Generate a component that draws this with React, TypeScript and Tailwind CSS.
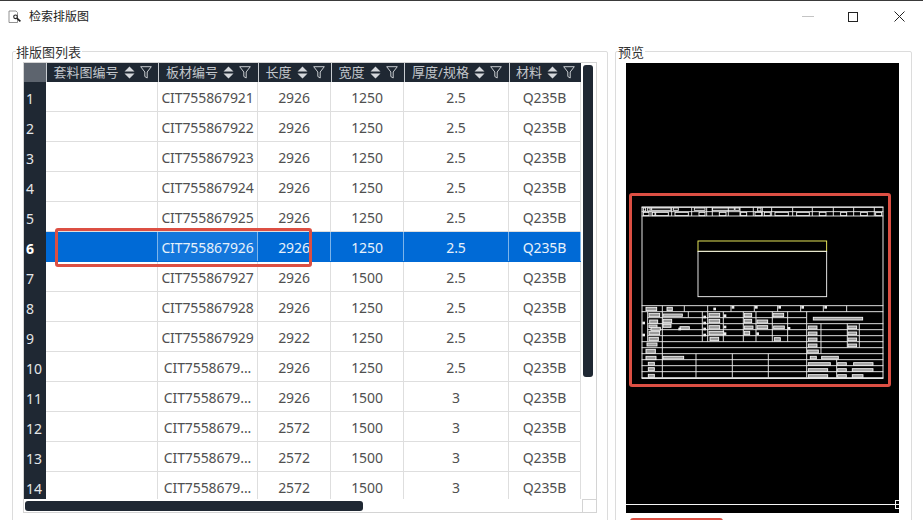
import React from "react";

type Row = { no: number; board: string; len: string; wid: string; thick: string };

const columns = [
  { title: "套料图编号", w: "w-[112px]" },
  { title: "板材编号", w: "w-[100px]" },
  { title: "长度", w: "w-[73px]" },
  { title: "宽度", w: "w-[73px]" },
  { title: "厚度/规格", w: "w-[105px]" },
  { title: "材料", w: "w-[72px]" },
];

const rows: Row[] = [
  { no: 1, board: "CIT755867921", len: "2926", wid: "1250", thick: "2.5" },
  { no: 2, board: "CIT755867922", len: "2926", wid: "1250", thick: "2.5" },
  { no: 3, board: "CIT755867923", len: "2926", wid: "1250", thick: "2.5" },
  { no: 4, board: "CIT755867924", len: "2926", wid: "1250", thick: "2.5" },
  { no: 5, board: "CIT755867925", len: "2926", wid: "1250", thick: "2.5" },
  { no: 6, board: "CIT755867926", len: "2926", wid: "1250", thick: "2.5" },
  { no: 7, board: "CIT755867927", len: "2926", wid: "1500", thick: "2.5" },
  { no: 8, board: "CIT755867928", len: "2926", wid: "1250", thick: "2.5" },
  { no: 9, board: "CIT755867929", len: "2922", wid: "1250", thick: "2.5" },
  { no: 10, board: "CIT7558679...", len: "2926", wid: "1250", thick: "2.5" },
  { no: 11, board: "CIT7558679...", len: "2926", wid: "1500", thick: "3" },
  { no: 12, board: "CIT7558679...", len: "2572", wid: "1500", thick: "3" },
  { no: 13, board: "CIT7558679...", len: "2572", wid: "1500", thick: "3" },
  { no: 14, board: "CIT7558679...", len: "2572", wid: "1500", thick: "3" },
];

const font = "font-['Noto_Sans','Noto_Sans_CJK_SC',sans-serif]";

const SortIcon = () => (
  <svg width="11" height="13" viewBox="0 0 11 13" className="shrink-0">
    <path d="M5.5 0.5 L10.5 5.5 L0.5 5.5 Z M0.5 7.5 L10.5 7.5 L5.5 12.5 Z" fill="#d5d8dc" />
  </svg>
);

const FilterIcon = () => (
  <svg width="12" height="13" viewBox="0 0 12 13" className="shrink-0">
    <path d="M0.7 0.7 H11.3 L7.2 6 V12 L4.8 10.5 V6 Z" fill="none" stroke="#c8ccd0" strokeWidth="1" />
  </svg>
);

const TitleIcon = () => (
  <svg width="14" height="14" viewBox="0 0 14 14" className="shrink-0">
    <path d="M1 1 H8 L9.5 2.5 V12.5 H1 Z" fill="#fff" stroke="#777" strokeWidth="0.8" />
    <circle cx="7.5" cy="6.8" r="1.8" fill="#fff" stroke="#222" strokeWidth="1.1" />
    <path d="M8.8 8.2 L12.4 11.4" stroke="#222" strokeWidth="1.7" />
  </svg>
);

const Box = ({ x, y, w, h, fill }: { x: number; y: number; w: number; h: number; fill?: boolean }) => (
  <rect x={x} y={y} width={w} height={h} fill={fill ? "#9a9a9a" : "none"} stroke="#f2f2f2" strokeWidth="2.8" />
);

const Ln = ({ x1, y1, x2, y2 }: { x1: number; y1: number; x2: number; y2: number }) => (
  <line x1={x1} y1={y1} x2={x2} y2={y2} stroke="#ececec" strokeWidth="2.8" />
);

// coordinates below are in 3x crop space, easier to read off
const topBand: number[][] = [
  [55, 54, 7, 9], [68, 54, 7, 9], [80, 54, 58, 7], [145, 54, 15, 7], [208, 54, 32, 7], [262, 54, 66, 7],
  [330, 54, 13, 7], [398, 54, 10, 9],
  [55, 67, 17, 10], [82, 67, 8, 10], [92, 67, 38, 10], [150, 67, 40, 10], [222, 67, 18, 10], [283, 67, 20, 10],
  [347, 67, 18, 10], [390, 67, 20, 10], [418, 67, 18, 10], [450, 67, 40, 10], [515, 67, 38, 10], [583, 67, 20, 10],
  [647, 67, 18, 10], [707, 67, 20, 10], [752, 67, 18, 10],
];
const topSeps = [78, 140, 200, 245, 262, 310, 345, 385, 412, 440, 503, 562, 625, 686, 748];

const lowerBoxes: number[][] = [
  [63, 37, 32, 10], [126, 37, 16, 10], [72, 55, 32, 10], [114, 57, 58, 7], [74, 75, 24, 10], [114, 73, 26, 10],
  [72, 90, 24, 8], [114, 88, 24, 9], [78, 97, 28, 9], [165, 95, 28, 8], [72, 109, 32, 10], [72, 127, 28, 10],
  [66, 144, 30, 9], [63, 163, 28, 12], [63, 184, 30, 10], [114, 184, 62, 8], [70, 202, 18, 9], [70, 218, 18, 9],
  [70, 238, 18, 9], [252, 55, 32, 10], [252, 73, 32, 10], [252, 92, 32, 10], [252, 109, 44, 10], [255, 127, 26, 10],
  [358, 55, 22, 10], [358, 73, 22, 10], [358, 93, 26, 8], [358, 109, 16, 10], [396, 75, 32, 9], [396, 92, 32, 9],
  [444, 55, 32, 10], [446, 93, 32, 8], [448, 128, 18, 10], [550, 93, 26, 9], [550, 111, 26, 9], [550, 129, 26, 9],
  [550, 147, 26, 9], [548, 165, 32, 9], [556, 184, 18, 8], [590, 184, 50, 8], [565, 67, 148, 8], [669, 93, 26, 8],
  [669, 111, 26, 8], [669, 129, 26, 8], [669, 147, 26, 8], [550, 203, 66, 8], [638, 203, 26, 8], [686, 203, 58, 8],
  [550, 221, 58, 8], [638, 221, 26, 8], [682, 221, 62, 8], [550, 239, 58, 8], [638, 239, 26, 8], [682, 239, 32, 8],
];
const lowerTicks: number[][] = [
  [320, 33], [390, 33], [460, 33], [529, 33], [598, 33], [52, 80], [52, 116], [235, 62], [235, 80], [235, 98], [235, 116],
  [296, 58], [296, 92], [296, 112], [394, 112], [488, 96], [160, 98], [265, 38],
];

const CadDrawing = () => (
  <svg viewBox="626 63 273 450" className="block w-full h-full">
    <rect x="642" y="207" width="241" height="171.5" fill="none" stroke="#f0f0f0" strokeWidth="0.95" />
    <g transform="translate(625 190) scale(0.3333)">
      <Ln x1={50} y1={52} x2={775} y2={52} />
      <Ln x1={50} y1={65} x2={775} y2={65} />
      <Ln x1={50} y1={78} x2={775} y2={78} />
      {topSeps.map((x) => (
        <Ln key={x} x1={x} y1={52} x2={x} y2={78} />
      ))}
      {topBand.map(([x, y, w, h], i) => (
        <Box key={i} x={x} y={y} w={w} h={h} />
      ))}
      <rect x="219" y="153" width="386" height="31" fill="none" stroke="#f2f25e" strokeWidth="2.8" />
      <rect x="219" y="184" width="386" height="136" fill="none" stroke="#f2f2f2" strokeWidth="2.8" />
    </g>
    <g transform="translate(625 295) scale(0.3333)">
      {[32, 50, 140, 158, 176, 194, 212, 230, 248].map((y) => (
        <Ln key={y} x1={50} y1={y} x2={775} y2={y} />
      ))}
      {[68, 86, 104, 122].map((y) => (
        <Ln key={y} x1={68} y1={y} x2={545} y2={y} />
      ))}
      {[86, 104, 122].map((y) => (
        <Ln key={y} x1={545} y1={y} x2={775} y2={y} />
      ))}
      {[112, 178, 248, 318, 388, 458, 527, 595, 665].map((x) => (
        <Ln key={x} x1={x} y1={32} x2={x} y2={50} />
      ))}
      <Ln x1={112} y1={50} x2={112} y2={248} />
      {[68, 232, 248, 295, 355, 393, 442, 488].map((x) => (
        <Ln key={x} x1={x} y1={50} x2={x} y2={140} />
      ))}
      <Ln x1={190} y1={50} x2={190} y2={68} />
      <Ln x1={545} y1={50} x2={545} y2={248} />
      {[213, 322, 430].map((x) => (
        <Ln key={x} x1={x} y1={176} x2={x} y2={248} />
      ))}
      <Ln x1={588} y1={86} x2={588} y2={176} />
      <Ln x1={667} y1={86} x2={667} y2={158} />
      <Ln x1={703} y1={86} x2={703} y2={158} />
      <Ln x1={635} y1={194} x2={635} y2={248} />
      {lowerBoxes.map(([x, y, w, h], i) => (
        <Box key={i} x={x} y={y} w={w} h={h} fill />
      ))}
      {lowerTicks.map(([x, y], i) => (
        <rect key={i} x={x} y={y} width="8" height="8" fill="#eeeeee" />
      ))}
    </g>
    <line x1="626" y1="504.5" x2="895" y2="504.5" stroke="#f5f5f5" strokeWidth="1" />
    <rect x="895.5" y="500.5" width="4" height="8" fill="none" stroke="#f5f5f5" strokeWidth="1" />
    <line x1="895.5" y1="504.5" x2="899" y2="504.5" stroke="#f5f5f5" strokeWidth="1" />
  </svg>
);

const SheetTable = () => (
  <div className="relative w-[574px] h-[451px] border border-[#d4d4d4] bg-white">
    <div className="flex w-[557px] h-[19px] bg-[#1f2833]">
      <div className="w-[22px] bg-[#5d646e]" />
      {columns.map((c) => (
        <div key={c.title} className={`${c.w} flex items-center justify-center gap-[5px] border-l border-[#c9cdd2] text-[13px] text-[#c3c7cc]`}>
          <span className="whitespace-nowrap">{c.title}</span>
          <SortIcon />
          <FilterIcon />
        </div>
      ))}
    </div>
    <div className="h-[417px] overflow-hidden">
      {rows.map((r) => {
        const sel = r.no === 6;
        const cell = `flex items-center justify-center pt-[2px] tracking-[-0.1px] border-r ${sel ? "border-[#7db4ea] text-[#e6f1fb]" : "border-[#dedede] text-[#505050]"}`;
        return (
          <div key={r.no} className="flex h-[30px] text-[14px]">
            <div className={`w-[22px] bg-[#1f2833] text-[#e4e6e8] pl-[2px] flex items-center pt-[2px] ${sel ? "font-bold text-white" : ""}`}>
              {r.no}
            </div>
            <div className={`flex w-[535px] border-b ${sel ? "bg-[#006ad6] border-[#006ad6]" : "border-[#dedede]"}`}>
              <div className={`w-[112px] ${cell}`} />
              <div className={`w-[100px] ${cell} ${sel ? "bg-[#1477dc]" : ""}`}>{r.board}</div>
              <div className={`w-[73px] ${cell}`}>{r.len}</div>
              <div className={`w-[73px] ${cell}`}>{r.wid}</div>
              <div className={`w-[105px] ${cell}`}>{r.thick}</div>
              <div className={`w-[72px] ${cell}`}>Q235B</div>
            </div>
          </div>
        );
      })}
    </div>
    {/* scrollbars sit on top of the grid */}
    <div className="absolute left-[559px] top-[2px] w-[10px] h-[312px] rounded-[3px] bg-[#1f2833]" />
    <div className="absolute left-[1px] top-[438px] w-[338px] h-[10px] rounded-[3px] bg-[#1f2833]" />
    <div className="absolute right-0 bottom-0 w-[14px] h-[13px] border-l border-t border-[#d4d4d4]" />
  </div>
);

export default function App() {
  return (
    <div className={`relative w-[923px] h-[520px] overflow-hidden bg-white ${font}`}>
      <div className="h-px bg-[#3a3a3a]" />
      <div className="flex items-center h-[31px] pl-[8px] text-[12px] text-[#222]">
        <TitleIcon />
        <span className="ml-[7px] whitespace-nowrap">检索排版图</span>
        <div className="ml-auto flex items-center">
          <div className="w-[12px] h-px bg-[#c4c4c4] mr-[34px]" />
          <div className="w-[10px] h-[10px] border border-[#222] mr-[36px]" />
          <svg width="11" height="11" viewBox="0 0 11 11" className="mr-[18px]">
            <path d="M0.5 0.5 L10.5 10.5 M10.5 0.5 L0.5 10.5" stroke="#222" strokeWidth="1" />
          </svg>
        </div>
      </div>
      <div className="flex pt-[19px] pl-[12px]">
        <section className="relative w-[596px] h-[500px] border border-[#dcdcdc] rounded-[2px] pl-[10px] pt-[10px]">
          <span className="absolute left-[3px] top-[-9px] bg-white pr-[1px] text-[13px] leading-[18px] text-[#333]">排版图列表</span>
          <SheetTable />
        </section>
        <section className="relative ml-[7px] w-[297px] h-[500px] border border-[#dcdcdc] rounded-[2px] pl-[10px] pt-[11px]">
          <span className="absolute left-[2px] top-[-9px] bg-white pr-[1px] text-[13px] leading-[18px] text-[#333]">预览</span>
          <div className="w-[273px] h-[450px] bg-black">
            <CadDrawing />
          </div>
        </section>
      </div>
      {/* red annotations drawn over the screenshot */}
      <div className="absolute left-[55px] top-[228px] w-[257px] h-[39px] border-[3px] border-[#dc4f43] rounded-[3px]" />
      <div className="absolute left-[629px] top-[193px] w-[262px] h-[194px] border-[3px] border-[#dc4f43] rounded-[3px]" />
      <div className="absolute left-[630px] top-[518px] w-[93px] h-[8px] bg-[#dc4f43] rounded-[3px]" />
    </div>
  );
}
